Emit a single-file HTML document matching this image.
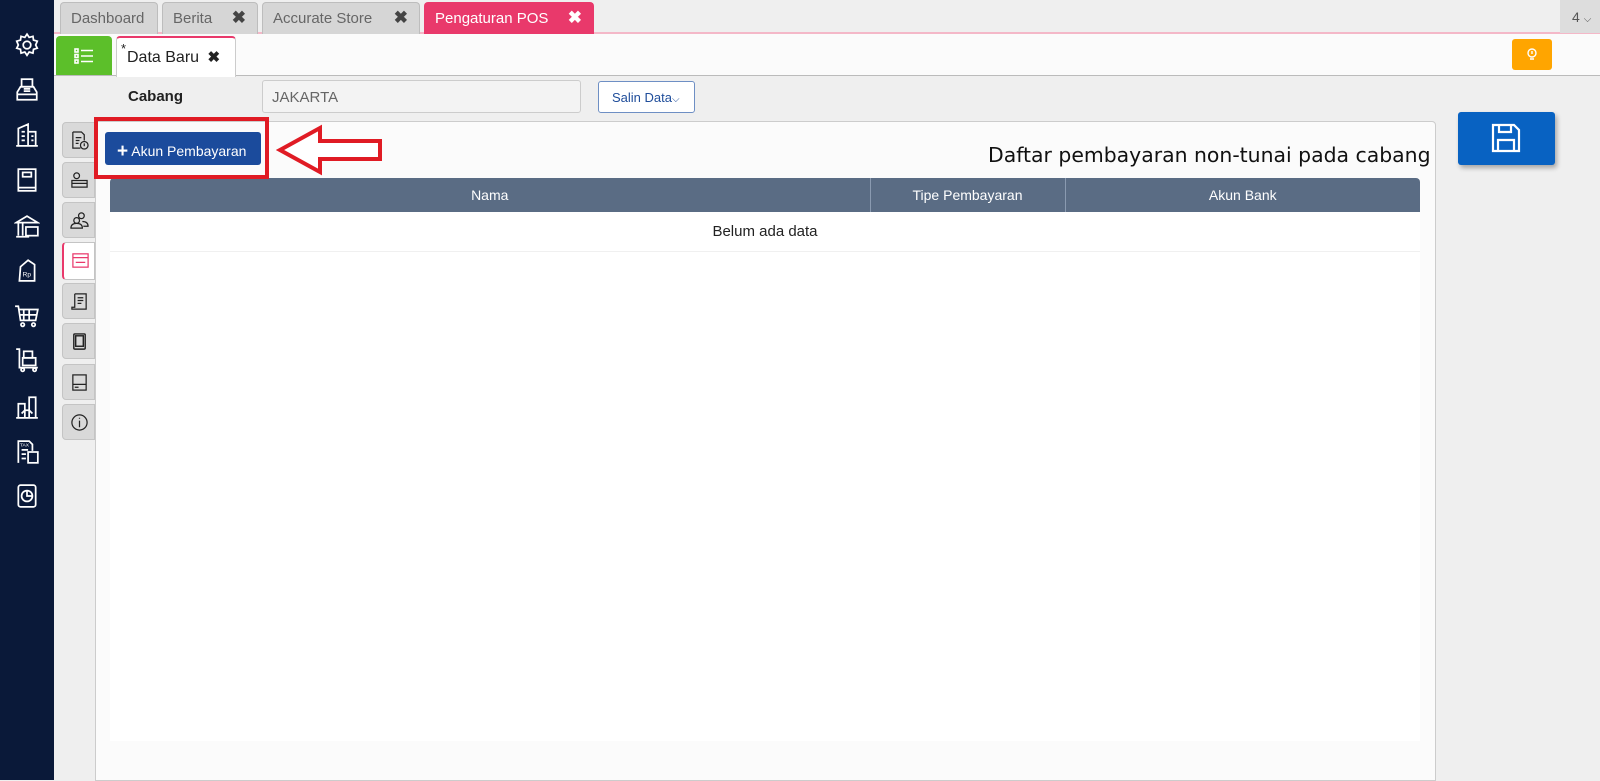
<!DOCTYPE html>
<html><head><meta charset="utf-8"><style>
*{margin:0;padding:0;box-sizing:border-box}
body{width:1600px;height:780px;overflow:hidden;background:#efefef;font-family:"Liberation Sans",sans-serif;position:relative}
.abs{position:absolute}
#side{left:0;top:0;width:54px;height:780px;background:#0a1939}
#side svg{position:absolute;left:14px;width:26px;height:26px}
#tabbar{left:54px;top:0;width:1546px;height:34px;background:#efefef;border-bottom:2px solid #f4b8c8}
.tab{position:absolute;top:2px;height:32px;background:#d6d6d6;border:1px solid #bdbdbd;border-bottom:none;border-radius:4px 4px 0 0;font-size:15px;color:#666;padding:7px 10px}
.tab b{position:absolute;right:11px;top:5px;font-size:17px;color:#444}
#bar2{left:54px;top:34px;width:1546px;height:42px;background:#fbfbfb;border-bottom:1px solid #bbb}
.vt{position:absolute;left:62px;width:33px;height:36px;background:#d9d9d9;border:1px solid #c4c4c4;border-radius:4px 0 0 4px}
.vt svg{position:absolute;left:7px;top:8px;width:19px;height:19px}
th{font-weight:normal}
</style></head><body>
<div id="side" class="abs">
<svg style="top:32px" viewBox="0 0 24 24" fill="none" stroke="#fff" stroke-width="1.6"><circle cx="12" cy="12" r="3.5"/><path d="M12 2l2 3 3.5-1 .5 3.5 3.5 1-1.5 3.5 1.5 3-3.5 1-.5 3.5-3.5-1-2 3-2-3-3.5 1-.5-3.5-3.5-1 1.5-3-1.5-3.5 3.5-1 .5-3.5 3.5 1z"/></svg>
<svg style="top:77px" viewBox="0 0 24 24" fill="none" stroke="#fff" stroke-width="1.6"><rect x="7" y="2" width="10" height="7"/><path d="M3 21v-7l3-5h12l3 5v7zM3 16h18M9 11h6M9 13h6"/></svg>
<svg style="top:122px" viewBox="0 0 24 24" fill="none" stroke="#fff" stroke-width="1.6"><path d="M4 22V6l9-4v20M13 9h7v13M2 22h20M7 9h3M7 13h3M7 17h3M16 13h2M16 17h2"/></svg>
<svg style="top:167px" viewBox="0 0 24 24" fill="none" stroke="#fff" stroke-width="1.6"><rect x="4" y="2" width="16" height="20"/><rect x="8" y="5" width="8" height="4"/><path d="M4 19h16"/></svg>
<svg style="top:214px" viewBox="0 0 24 24" fill="none" stroke="#fff" stroke-width="1.6"><path d="M2 8l10-6 10 6zM4 8v12M8 8v12M2 21h12"/><rect x="11" y="12" width="11" height="8"/></svg>
<svg style="top:257px" viewBox="0 0 24 24" fill="none" stroke="#fff" stroke-width="1.6"><path d="M6 9l7-6 6 4v15H5z"/><text x="8" y="18" font-size="6" fill="#fff" stroke="none">Rp</text></svg>
<svg style="top:303px" viewBox="0 0 24 24" fill="none" stroke="#fff" stroke-width="1.6"><path d="M1 3h3l2 13h14l2-10H5M9 6v10M14 6v10M6 11h15"/><circle cx="8" cy="20" r="1.6"/><circle cx="18" cy="20" r="1.6"/></svg>
<svg style="top:347px" viewBox="0 0 24 24" fill="none" stroke="#fff" stroke-width="1.6"><path d="M2 2h3v17h17"/><rect x="9" y="4" width="8" height="6"/><rect x="8" y="10" width="12" height="7"/><circle cx="8" cy="21" r="1.5"/><circle cx="19" cy="21" r="1.5"/></svg>
<svg style="top:394px" viewBox="0 0 24 24" fill="none" stroke="#fff" stroke-width="1.6"><path d="M2 22h20M4 22V9h6v13M14 22V3h6v19M7 18l3-3h4l3 3"/></svg>
<svg style="top:439px" viewBox="0 0 24 24" fill="none" stroke="#fff" stroke-width="1.6"><path d="M4 22V2h10l3 3v6M7 10h6M7 14h4M7 18h4"/><rect x="13" y="12" width="9" height="10"/><text x="5.5" y="7" font-size="4.5" fill="#fff" stroke="none">TAX</text></svg>
<svg style="top:483px" viewBox="0 0 24 24" fill="none" stroke="#fff" stroke-width="1.6"><rect x="4" y="2" width="16" height="20" rx="2"/><circle cx="12" cy="12" r="5"/><path d="M12 7v5h5"/></svg>
</div>
<div id="tabbar" class="abs">
<div class="tab" style="left:6px;width:98px">Dashboard</div>
<div class="tab" style="left:108px;width:96px">Berita<b>✖</b></div>
<div class="tab" style="left:208px;width:158px">Accurate Store<b>✖</b></div>
<div class="tab" style="left:370px;width:170px;background:#e9396b;border-color:#e9396b;color:#fff">Pengaturan POS<b style="color:#fff">✖</b></div>
<div class="abs" style="right:0;top:0;width:40px;height:33px;background:#ddd;font-size:14px;color:#555;padding:9px 0 0 12px">4 <span style="font-size:10px">⌵</span></div>
</div>
<div id="bar2" class="abs">
<div class="abs" style="left:2px;top:2px;width:56px;height:39px;background:#5cbf2a;border-radius:4px 4px 0 0">
<svg style="position:absolute;left:18px;top:12px" width="20" height="16" viewBox="0 0 20 16" fill="none" stroke="#fff" stroke-width="1.6"><rect x="1" y="1" width="3" height="3"/><rect x="1" y="6.5" width="3" height="3"/><rect x="1" y="12" width="3" height="3"/><path d="M7 2.5h12M7 8h12M7 13.5h12"/></svg></div>
<div class="abs" style="left:62px;top:2px;width:120px;height:41px;background:#fff;border:1px solid #ccc;border-top:2px solid #e9396b;border-bottom:none;border-radius:4px 4px 0 0;font-size:16px;color:#222;padding:10px 0 0 10px"><span style="position:absolute;left:4px;top:3px;font-size:13px">*</span>Data Baru <b style="font-size:15px;margin-left:4px">✖</b></div>
<div class="abs" style="left:1458px;top:5px;width:40px;height:31px;background:#ffa500;border-radius:3px">
<svg style="position:absolute;left:13px;top:8px" width="14" height="15" viewBox="0 0 14 15" fill="none" stroke="#fff" stroke-width="1.4"><circle cx="7" cy="6" r="4"/><path d="M5 12h4M7 4v3"/></svg></div>
</div>
<div class="abs" style="left:128px;top:88px;font-size:15px;font-weight:bold;color:#222">Cabang</div>
<div class="abs" style="left:262px;top:80px;width:319px;height:33px;background:#f3f3f3;border:1px solid #ccc;border-radius:3px;font-size:15px;color:#666;padding:8px 9px">JAKARTA</div>
<div class="abs" style="left:598px;top:81px;width:97px;height:32px;background:#fff;border:1px solid #6e8fc4;border-radius:3px;font-size:13px;color:#1f4d9a;padding:8px 0 0 13px">Salin Data<span style="font-size:10px">⌵</span></div>
<div class="abs" style="left:1458px;top:112px;width:97px;height:53px;background:#0862c2;border-radius:3px;box-shadow:2px 3px 5px rgba(0,0,0,.3)">
<svg style="position:absolute;left:32px;top:10px" width="32" height="32" viewBox="0 0 32 32" fill="none" stroke="#fff" stroke-width="2.2"><path d="M3 3h21l5 5v21H3z"/><path d="M9 3v7h12V3M8 29V18h16v11"/></svg></div>
<div class="vt" style="top:122px"><svg viewBox="0 0 20 20" fill="none" stroke="#222" stroke-width="1.3"><path d="M3 1h9l3 3v6M3 1v17h8M6 7h6M6 10h4M6 13h3"/><circle cx="15" cy="15" r="4"/><path d="M15 13v3"/></svg></div>
<div class="vt" style="top:162px"><svg viewBox="0 0 20 20" fill="none" stroke="#222" stroke-width="1.3"><circle cx="7" cy="5" r="3"/><path d="M2 10h16v7H2zM2 13h16"/></svg></div>
<div class="vt" style="top:202px"><svg viewBox="0 0 20 20" fill="none" stroke="#222" stroke-width="1.3"><circle cx="12" cy="5" r="3"/><circle cx="7" cy="10" r="3"/><path d="M1 18c0-4 3-5 6-5s6 1 6 5zM13 11c3 0 6 1 6 5h-5"/></svg></div>
<div class="vt" style="top:242px;height:38px;background:#fff;border-left:2px solid #e9396b"><svg viewBox="0 0 20 20" fill="none" stroke="#e9396b" stroke-width="1.3"><rect x="2" y="3" width="16" height="14"/><path d="M2 7h16M5 12h10"/></svg></div>
<div class="vt" style="top:283px"><svg viewBox="0 0 20 20" fill="none" stroke="#222" stroke-width="1.3"><path d="M5 2h12v13M5 2v14H2v2h15v-3M8 6h6M8 9h6M8 12h4"/></svg></div>
<div class="vt" style="top:323px"><svg viewBox="0 0 20 20" fill="none" stroke="#222" stroke-width="1.5"><rect x="4" y="2" width="12" height="16" rx="1"/><rect x="6" y="4" width="8" height="11"/></svg></div>
<div class="vt" style="top:364px"><svg viewBox="0 0 20 20" fill="none" stroke="#222" stroke-width="1.3"><rect x="3" y="2" width="14" height="16"/><path d="M3 12h14M5 15h4"/></svg></div>
<div class="vt" style="top:404px"><svg viewBox="0 0 20 20" fill="none" stroke="#222" stroke-width="1.3"><circle cx="10" cy="10" r="8"/><path d="M10 8v7M10 5v1"/></svg></div>
<div class="abs" style="left:95px;top:121px;width:1341px;height:660px;background:#fbfbfb;border:1px solid #ccc;border-radius:0 4px 0 0"></div>
<div class="abs" style="left:110px;top:178px;width:1310px;height:563px;background:#fff"></div>
<div class="abs" style="left:988px;top:143px;font-size:20.4px;color:#111;font-family:'DejaVu Sans','Liberation Sans',sans-serif;white-space:nowrap">Daftar pembayaran non-tunai pada cabang</div>
<table class="abs" style="left:110px;top:178px;width:1310px;border-collapse:collapse;font-size:14px;color:#fff">
<tr style="background:#5a6c84;height:34px"><th style="width:760px;border-radius:4px 0 0 0">Nama</th><th style="width:195px;border-left:1px solid #8a9ab0">Tipe Pembayaran</th><th style="border-left:1px solid #8a9ab0;border-radius:0 4px 0 0">Akun Bank</th></tr>
<tr style="height:39px;color:#222;background:#fff;border-bottom:1px solid #f0f0f0"><td colspan="3" style="text-align:center;font-size:15px">Belum ada data</td></tr>
</table>
<div class="abs" style="left:94px;top:117px;width:175px;height:62px;border:4px solid #e01b24"></div>
<div class="abs" style="left:105px;top:132px;width:156px;height:33px;background:#1b4b9c;border-radius:3px;color:#fff;font-size:14px;padding:8px 0 0 12px"><b style="font-size:19px;position:relative;top:1px">+</b> Akun Pembayaran</div>
<svg class="abs" style="left:276px;top:124px" width="110" height="52" viewBox="0 0 110 52"><path d="M4 26L44 4v13h60v18H44v13z" fill="#fff" stroke="#e01b24" stroke-width="4" stroke-linejoin="miter"/></svg>
</body></html>
